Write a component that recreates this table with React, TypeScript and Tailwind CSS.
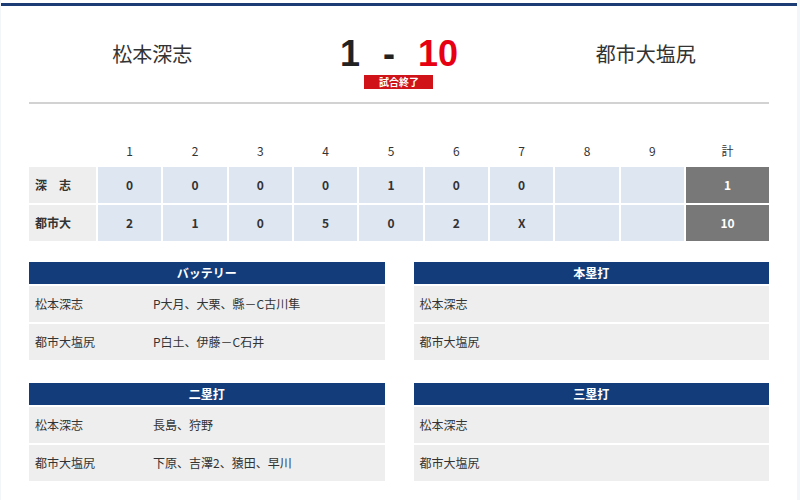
// Baseball game result: score header, line score and hit summary panels.

const FONT = { fontFamily: '"Noto Sans CJK JP", "Noto Sans", sans-serif' };

interface LineRow {
  label: string;
  runs:  string[];
  total: string;
}

const innings = ['1', '2', '3', '4', '5', '6', '7', '8', '9'];

const lineScore: LineRow[] = [
  { label: '深　志', runs: ['0', '0', '0', '0', '1', '0', '0', '', ''],  total: '1' },
  { label: '都市大', runs: ['2', '1', '0', '5', '0', '2', 'X', '', ''], total: '10' },
];

interface Panel {
  title: string;
  rows:  [string, string][];
}

const panels: Panel[] = [
  { title: 'バッテリー', rows: [['松本深志', 'P大月、大栗、縣－C古川隼'], ['都市大塩尻', 'P白土、伊藤－C石井']] },
  { title: '本塁打',     rows: [['松本深志', ''], ['都市大塩尻', '']] },
  { title: '二塁打',     rows: [['松本深志', '長島、狩野'], ['都市大塩尻', '下原、吉澤2、猿田、早川']] },
  { title: '三塁打',     rows: [['松本深志', ''], ['都市大塩尻', '']] },
];

function SummaryPanel({ panel }: { panel: Panel }) {
  return (
    <div className="flex flex-col gap-[2px]">
      <div className="h-[22px] bg-[#133d7a] text-white text-[12px] font-bold leading-[22px] text-center">
        {panel.title}
      </div>
      {panel.rows.map(([team, names]) => (
        <div key={team} className="flex h-[36px] items-center bg-[#eeeeee] pl-[6px] text-[12px] text-[#333]">
          <div className="w-[118px] shrink-0">{team}</div>
          <div>{names}</div>
        </div>
      ))}
    </div>
  );
}

export default function App() {
  return (
    <div className="w-[800px] h-[500px] bg-[#f3f6f8] overflow-hidden" style={FONT}>
      <div className="ml-[1px] w-[796px] h-full bg-white pt-[3px]">
        {/* top rule */}
        <div className="h-[3px] bg-[#1b3c74]" />

        <div className="px-[28px]">
          {/* score header */}
          <div className="grid grid-cols-3 pt-[30px]">
            <div className="h-[36px] leading-[36px] text-center text-[20px] text-[#333]">松本深志</div>
            <div className="flex flex-col items-center">
              <div
                className="flex h-[36px] items-start justify-center gap-[23px] text-[36px] font-bold leading-[36px]"
                style={{ fontFamily: '"Liberation Sans", Arial, sans-serif' }}
              >
                <span className="text-[#222]">1</span>
                <span className="text-[#222]">-</span>
                <span className="text-[#e60012]">10</span>
              </div>
              <div className="mt-[3px] w-[69px] h-[14px] bg-[#cf1318] text-white text-[10px] font-bold leading-[14px] text-center">
                試合終了
              </div>
            </div>
            <div className="h-[36px] leading-[36px] text-center text-[20px] text-[#333]">都市大塩尻</div>
          </div>

          <div className="mt-[13px] h-[2px] bg-[#d2d2d2]" />

          {/* line score */}
          <div className="mt-[32px] grid grid-cols-[67px_repeat(9,minmax(0,1fr))_83px] gap-[2px] text-[12px] text-[#333]">
            <div className="h-[29px]" />
            {innings.map((n) => (
              <div key={n} className="h-[29px] flex items-center justify-center">{n}</div>
            ))}
            <div className="h-[29px] flex items-center justify-center">計</div>

            {lineScore.map((row) => (
              <div key={row.label} className="contents">
                <div className="h-[36px] flex items-center bg-[#eeeeee] pl-[6px] font-bold">{row.label}</div>
                {row.runs.map((r, i) => (
                  <div key={i} className="h-[36px] flex items-center justify-center bg-[#dee6f2] font-bold">{r}</div>
                ))}
                <div className="h-[36px] flex items-center justify-center bg-[#787878] text-white font-bold">{row.total}</div>
              </div>
            ))}
          </div>

          {/* summary panels */}
          <div className="mt-[21px] grid grid-cols-2 gap-x-[29px] gap-y-[23px]">
            {panels.map((p) => (
              <SummaryPanel key={p.title} panel={p} />
            ))}
          </div>
        </div>
      </div>
    </div>
  );
}
